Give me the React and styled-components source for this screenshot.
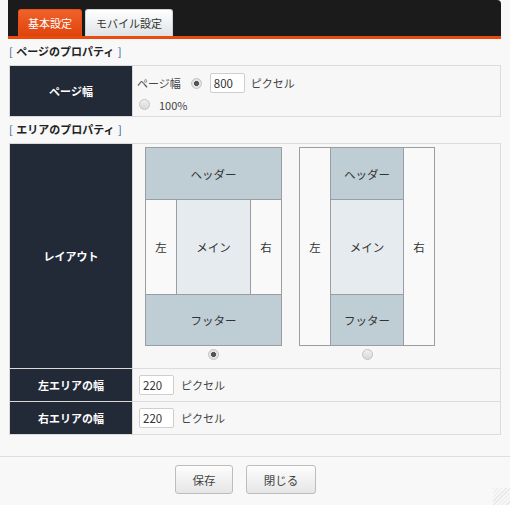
import React from "react";
import styled, { createGlobalStyle } from "styled-components";

const Global = createGlobalStyle`
  html, body { margin: 0; padding: 0; background: #f8f8f8; }
  body { font-family: "Noto Sans CJK JP", "Noto Sans", sans-serif; font-size: 11px; color: #333; }
`;

const Page = styled.div`
  position: relative;
  min-height: 505px;
  display: flex;
  flex-direction: column;
`;

const Main = styled.div`
  margin-left: 8px;
  width: 493px;
`;

const TopBar = styled.div`
  height: 36px;
  background: #1b1b1b;
  border-bottom: 3px solid #ea4b0c;
  border-radius: 0 4px 0 0;
  display: flex;
  align-items: flex-end;
  padding-left: 10px;
  gap: 3px;
`;

const Tab = styled.div`
  height: 27px;
  box-sizing: border-box;
  padding: 0 ${(p) => (p.$wide ? 10 : 9)}px;
  border-radius: 3px 3px 0 0;
  display: flex;
  align-items: center;
  font-size: 11px;
  color: ${(p) => (p.$active ? "#fff" : "#333")};
  background: ${(p) =>
    p.$active
      ? "linear-gradient(#f0622a, #e0430c)"
      : "linear-gradient(#ffffff, #dfe3e6)"};
  border: 1px solid ${(p) => (p.$active ? "#e8501a" : "#cfd4d8")};
  border-bottom: none;
`;

const SectionTitle = styled.div`
  height: 26px;
  line-height: 24px;
  padding-left: 1px;
  font-weight: bold;
  font-size: 11px;
  color: #222;
  word-spacing: 1px;
`;

const Bracket = styled.span`
  color: #2a5b9a;
  font-weight: normal;
`;

const Table = styled.table`
  margin-left: 1px;
  width: 492px;
  border-collapse: collapse;
  background: #f7f7f7;
`;

const Label = styled.th`
  width: 122px;
  background: #232a37;
  color: #fff;
  font-weight: bold;
  font-size: 11px;
  border: 1px solid #d9d9d9;
  border-top-color: ${(p) => (p.$inner ? "#555" : "#d9d9d9")};
  padding: 0;
  height: ${(p) => p.$h}px;
`;

const Cell = styled.td`
  border: 1px solid #dcdcdc;
  padding: ${(p) => p.$pad || "0 0 0 6px"};
  vertical-align: ${(p) => p.$valign || "middle"};
`;

const Line = styled.div`
  display: flex;
  align-items: center;
  height: ${(p) => p.$h}px;
  padding-left: ${(p) => p.$pl || 0}px;
`;

const Text = styled.span`
  margin-left: ${(p) => p.$ml || 0}px;
  color: #444;
  font-size: 11px;
`;

const Radio = styled.span`
  display: inline-block;
  box-sizing: border-box;
  width: 11px;
  height: 11px;
  border-radius: 50%;
  border: 1px solid #c4c4c4;
  background: ${(p) =>
    p.$checked
      ? "radial-gradient(circle, #555 0 2.4px, #e3e3e3 2.8px)"
      : "linear-gradient(#f0f0f0, #d8d8d8)"};
  margin-left: ${(p) => p.$ml || 0}px;
  flex: none;
`;

const Input = styled.div`
  box-sizing: border-box;
  width: 35px;
  height: 20px;
  background: #fff;
  border: 1px solid #cfcfcf;
  border-radius: 2px;
  padding-left: 3px;
  line-height: 18px;
  font-size: 11.5px;
  color: #333;
  margin-left: ${(p) => p.$ml || 0}px;
`;

const Layouts = styled.div`
  display: flex;
  gap: 17px;
  padding: 3px 0 0 12px;
`;

const LayoutOption = styled.div`
  display: flex;
  flex-direction: column;
  align-items: center;
  gap: 3px;
  height: 221px;
`;

const Diagram = styled.div`
  display: grid;
  grid-template-columns: 30px ${(p) => p.$mid}px 30px;
  grid-template-rows: 51px 94px 50px;
  gap: 1px;
  padding: 1px;
  background: #9a9ea2;
`;

const Area = styled.div`
  display: flex;
  align-items: center;
  justify-content: center;
  font-size: 11.5px;
  color: #333;
  background: ${(p) =>
    p.$kind === "band" ? "#bfcdd5" : p.$kind === "main" ? "#e5ebef" : "#f9f9f9"};
  grid-column: ${(p) => p.$col || "auto"};
  grid-row: ${(p) => p.$row || "auto"};
`;

const Footer = styled.div`
  margin-top: 21px;
  border-top: 1px solid #dedede;
  display: flex;
  justify-content: center;
  gap: 13px;
  padding: 8px 19px 0 0;
  flex: 1;
`;

const Button = styled.div`
  box-sizing: border-box;
  width: ${(p) => p.$w}px;
  height: 29px;
  border: 1px solid #bdbdbd;
  border-radius: 3px;
  background: linear-gradient(#fdfdfd, #e6e6e6);
  display: flex;
  align-items: center;
  justify-content: center;
  font-size: 11.5px;
  color: #444;
`;

const Grip = styled.div`
  position: absolute;
  right: 0;
  bottom: 0;
  width: 17px;
  height: 17px;
  background: repeating-linear-gradient(
    135deg,
    #e8e8e8 0 1px,
    #f7f7f7 1px 3px
  );
`;

export default function App() {
  return (
    <Page>
      <Global />
      <Main>
        <TopBar>
          <Tab $active>基本設定</Tab>
          <Tab $wide>モバイル設定</Tab>
        </TopBar>

        <SectionTitle>
          <Bracket>[</Bracket> ページのプロパティ <Bracket>]</Bracket>
        </SectionTitle>
        <Table>
          <tbody>
            <tr>
              <Label $h={49}>ページ幅</Label>
              <Cell $pad="4px 0 3px 4px" $valign="top">
                <Line $h={26}>
                  <Text>ページ幅</Text>
                  <Radio $checked $ml={10} />
                  <Input $ml={8}>800</Input>
                  <Text $ml={6}>ピクセル</Text>
                </Line>
                <Line $h={17} $pl={2}>
                  <Radio />
                  <Text $ml={9}>100%</Text>
                </Line>
              </Cell>
            </tr>
          </tbody>
        </Table>

        <SectionTitle>
          <Bracket>[</Bracket> エリアのプロパティ <Bracket>]</Bracket>
        </SectionTitle>
        <Table>
          <tbody>
            <tr>
              <Label $h={223}>レイアウト</Label>
              <Cell $pad="0" $valign="top">
                <Layouts>
                  <LayoutOption>
                    <Diagram $mid={73}>
                      <Area $kind="band" $col="1 / 4">ヘッダー</Area>
                      <Area>左</Area>
                      <Area $kind="main">メイン</Area>
                      <Area>右</Area>
                      <Area $kind="band" $col="1 / 4">フッター</Area>
                    </Diagram>
                    <Radio $checked />
                  </LayoutOption>
                  <LayoutOption>
                    <Diagram $mid={72}>
                      <Area $row="1 / 4" $col="1">左</Area>
                      <Area $kind="band" $col="2">ヘッダー</Area>
                      <Area $kind="main" $col="2">メイン</Area>
                      <Area $kind="band" $col="2">フッター</Area>
                      <Area $row="1 / 4" $col="3">右</Area>
                    </Diagram>
                    <Radio />
                  </LayoutOption>
                </Layouts>
              </Cell>
            </tr>
            <tr>
              <Label $h={32} $inner>左エリアの幅</Label>
              <Cell>
                <Line $h={32}>
                  <Input>220</Input>
                  <Text $ml={7}>ピクセル</Text>
                </Line>
              </Cell>
            </tr>
            <tr>
              <Label $h={32} $inner>右エリアの幅</Label>
              <Cell>
                <Line $h={32}>
                  <Input>220</Input>
                  <Text $ml={7}>ピクセル</Text>
                </Line>
              </Cell>
            </tr>
          </tbody>
        </Table>
      </Main>
      <Footer>
        <Button $w={58}>保存</Button>
        <Button $w={70}>閉じる</Button>
      </Footer>
      <Grip />
    </Page>
  );
}
